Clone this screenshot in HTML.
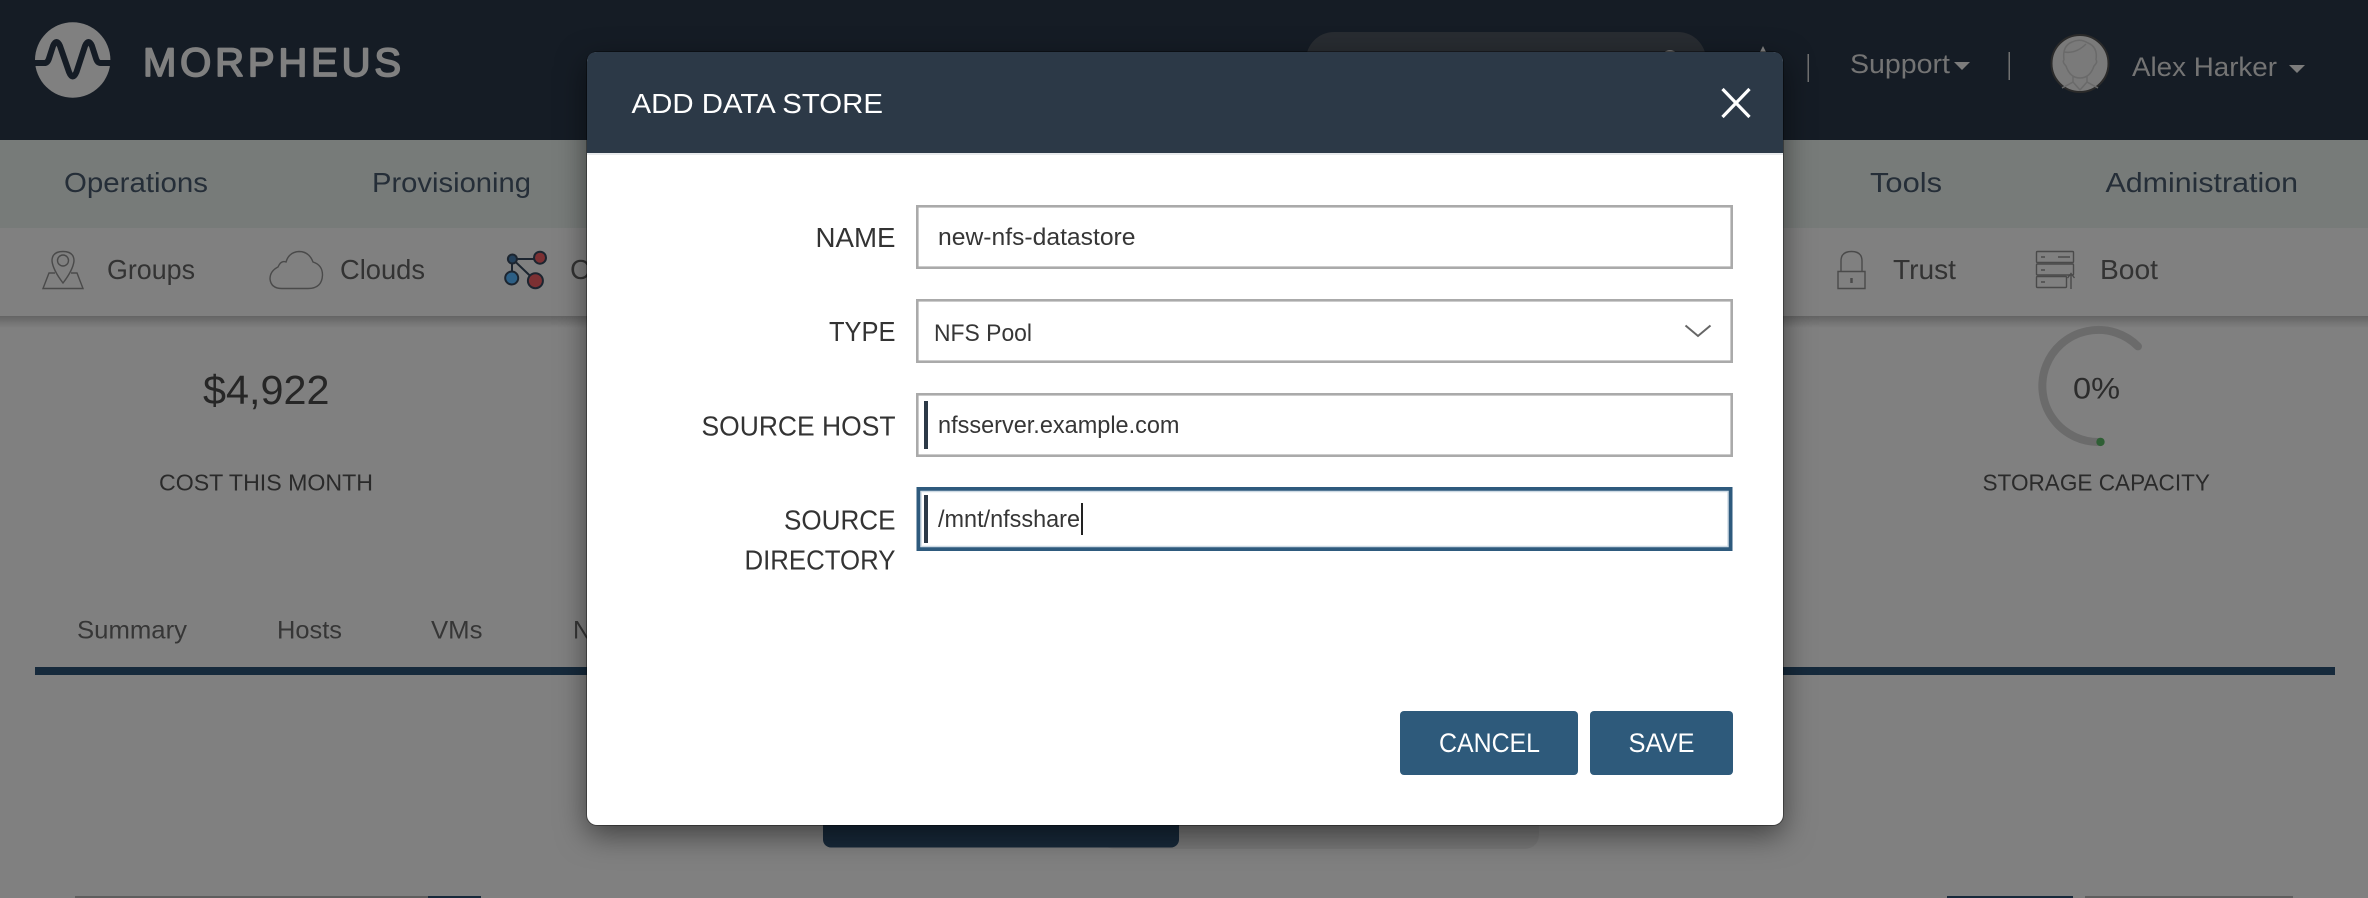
<!DOCTYPE html>
<html>
<head>
<meta charset="utf-8">
<title>Add Data Store</title>
<style>
html,body{margin:0;padding:0;width:2368px;height:898px;overflow:hidden;background:#808080}
svg{position:absolute;left:0;top:0;display:block}
text{font-family:"Liberation Sans",sans-serif}
#modal{position:absolute;left:587px;top:52px;width:1196px;height:773px;background:#fff;border-radius:10px;box-shadow:0 0 0 1px rgba(0,0,0,.35),0 10px 30px rgba(0,0,0,.5)}
</style>
</head>
<body>
<svg width="2368" height="898" viewBox="0 0 2368 898">
<defs><linearGradient id="sh" x1="0" y1="0" x2="0" y2="1"><stop offset="0" stop-color="#000" stop-opacity=".22"/><stop offset="1" stop-color="#000" stop-opacity="0"/></linearGradient></defs>
<rect width="2368" height="898" fill="#808080"/>
<rect width="2368" height="140" fill="#151c25"/>
<rect y="140" width="2368" height="88" fill="#777b79"/>
<rect y="316" width="2368" height="12" fill="url(#sh)"/>

<!-- logo -->
<circle cx="72.7" cy="60" r="37.7" fill="#808080"/>
<path d="M33 63H44.500Q47.500 63 49 58.500L53 46Q56.500 38 60 46L69 72Q72.700 81 76.500 72L85 46Q88.500 38 92 46L96 58.500Q97.500 63 100.500 63H112" fill="none" stroke="#151c25" stroke-width="6"/>
<text x="143" y="76" font-size="40" textLength="258" lengthAdjust="spacing" fill="#808080" stroke="#808080" stroke-width="1.700" stroke-linejoin="round">MORPHEUS</text>

<!-- top right -->
<rect x="1306" y="32" width="400" height="60" rx="28" fill="#282c31"/>
<circle cx="1670" cy="58" r="8" fill="#707070"/>
<path d="M1763 46l3 6h-6z" fill="#808080"/>
<rect x="1807.500" y="54" width="1.500" height="28" fill="#707070"/>
<text x="1850" y="73" font-size="27" textLength="100" lengthAdjust="spacingAndGlyphs" fill="#747474">Support</text>
<path d="M1954 62h16l-8 8z" fill="#7c7c7c"/>
<rect x="2008.500" y="52" width="1.500" height="28" fill="#707070"/>
<circle cx="2080" cy="63.500" r="28.500" fill="#7a7a7a" stroke="#2a2a2a" stroke-width="2"/>
<path d="M2064 60Q2062 46 2072 42Q2080 38 2088 43Q2098 47 2096 60M2064 60Q2062 62 2066 66Q2070 78 2080 78Q2090 78 2094 66Q2098 62 2096 60M2064 52Q2076 54 2086 44M2073 76V82L2062 88M2087 76V82L2098 88M2073 82L2080 90L2087 82" fill="none" stroke="#6a6a6a" stroke-width="1.500"/>
<text x="2132" y="76" font-size="27" textLength="145" lengthAdjust="spacingAndGlyphs" fill="#747474">Alex Harker</text>
<path d="M2289 65h16l-8 8z" fill="#7c7c7c"/>

<!-- primary nav -->
<g font-size="28" fill="#252e38">
<text x="64" y="192" textLength="144" lengthAdjust="spacingAndGlyphs">Operations</text>
<text x="372" y="192" textLength="159" lengthAdjust="spacingAndGlyphs">Provisioning</text>
<text x="1870" y="192" textLength="72" lengthAdjust="spacingAndGlyphs">Tools</text>
<text x="2105.500" y="192" textLength="192.500" lengthAdjust="spacingAndGlyphs">Administration</text>
</g>

<!-- secondary nav -->
<g font-size="28" fill="#333">
<text x="107" y="279" textLength="88" lengthAdjust="spacingAndGlyphs">Groups</text>
<text x="340" y="279" textLength="85" lengthAdjust="spacingAndGlyphs">Clouds</text>
<text x="570" y="279" font-size="28">C</text>
<text x="1893" y="279" textLength="63" lengthAdjust="spacingAndGlyphs">Trust</text>
<text x="2100" y="279" textLength="58" lengthAdjust="spacingAndGlyphs">Boot</text>
</g>
<g fill="none" stroke="#4a4a4a" stroke-width="1.400">
<path d="M63 283Q53 270 52 261Q52 251.500 63 251.500Q74 251.500 74 261Q73 270 63 283Z"/>
<circle cx="63" cy="260.500" r="5.500"/>
<path d="M55 273H49L43 288.500H83L77 273H71"/>
<path d="M287 288.500H308Q322 288.500 322.500 275Q322.500 265 313 262Q309 251.500 299 251.500Q289 252 286 262Q281 260 278 267Q270 271 270 279Q271 288.500 282 288.500Z"/>
<path d="M1838 271.500H1865V288.500H1838Z"/>
<path d="M1841 271.500V261Q1841 251.500 1851.500 251.500Q1862 251.500 1862 261V271.500"/>
<path d="M1851.500 278V283" stroke-width="2.500"/>
<rect x="2036.500" y="251.500" width="37" height="11" rx="1"/>
<rect x="2036.500" y="264" width="37" height="11" rx="1"/>
<rect x="2036.500" y="276.500" width="30" height="11" rx="1"/>
<path d="M2041 257h4M2041 270h4M2041 282h4M2058 257h12"/>
<path d="M2071 289V274M2067.500 278L2071 273.500L2074.500 278"/>
</g>
<g stroke="#1c2530" stroke-width="2">
<path d="M512.500 259H540M512 259V278M512.500 259L535.500 281" fill="none"/>
<circle cx="540" cy="257.700" r="6" fill="#7c3033"/>
<circle cx="511.700" cy="278" r="6.500" fill="#2d5f85"/>
<circle cx="535.400" cy="280.700" r="7.500" fill="#7c3033"/>
<circle cx="512.400" cy="259" r="4.500" fill="#24405a"/>
</g>

<!-- stats -->
<text x="203" y="404" font-size="41" textLength="126.500" lengthAdjust="spacingAndGlyphs" fill="#262626">$4,922</text>
<text x="159" y="490.500" font-size="23" textLength="214" lengthAdjust="spacingAndGlyphs" fill="#2a2a2a">COST THIS MONTH</text>
<path d="M2100.500 441.900A56 56 0 1 1 2138 346.400" fill="none" stroke="#6b6b6b" stroke-width="8" stroke-linecap="round"/>
<circle cx="2100.500" cy="441.900" r="4.200" fill="#2f5f35"/>
<text x="2073" y="398.500" font-size="30" textLength="47" lengthAdjust="spacingAndGlyphs" fill="#2c2c2c">0%</text>
<text x="1982.500" y="490.500" font-size="23" textLength="227.500" lengthAdjust="spacingAndGlyphs" fill="#2a2a2a">STORAGE CAPACITY</text>

<!-- tabs -->
<g font-size="25" fill="#363636">
<text x="77" y="638.500" textLength="110" lengthAdjust="spacingAndGlyphs">Summary</text>
<text x="277" y="638.500" textLength="65" lengthAdjust="spacingAndGlyphs">Hosts</text>
<text x="431" y="638.500" textLength="51.500" lengthAdjust="spacingAndGlyphs">VMs</text>
<text x="573" y="638.500">N</text>
</g>
<rect x="35" y="667" width="2300" height="8" fill="#162a3c"/>

<!-- content behind modal -->
<rect x="1100" y="760" width="439" height="89" rx="14" fill="#797979"/>
<rect x="823" y="760" width="356" height="87.500" rx="8" fill="#17293a"/>
<rect x="75" y="896" width="353" height="2" fill="#5e5e5e"/>
<rect x="428" y="896" width="53" height="2" fill="#17293a"/>
<rect x="1947" y="896" width="126" height="2" fill="#17293a"/>
<rect x="2085" y="896" width="208" height="2" fill="#5e5e5e"/>
</svg>

<div id="modal"></div>

<svg width="2368" height="898" viewBox="0 0 2368 898">
<path d="M587 153V62Q587 52 597 52H1773Q1783 52 1783 62V153Z" fill="#2c3947"/>
<rect x="587" y="153" width="1196" height="2" fill="#e8eaec"/>
<text x="631.500" y="113" font-size="28" textLength="251.500" lengthAdjust="spacingAndGlyphs" fill="#fff">ADD DATA STORE</text>
<path d="M1722.500 89L1749.500 117M1749.500 89L1722.500 117" stroke="#fff" stroke-width="3.200" fill="none"/>

<g font-size="28" fill="#333">
<text x="815.500" y="247" textLength="80" lengthAdjust="spacingAndGlyphs">NAME</text>
<text x="829" y="341" textLength="66.500" lengthAdjust="spacingAndGlyphs">TYPE</text>
<text x="701.500" y="435.500" textLength="194" lengthAdjust="spacingAndGlyphs">SOURCE HOST</text>
<text x="784" y="529.500" textLength="111.500" lengthAdjust="spacingAndGlyphs">SOURCE</text>
<text x="744.500" y="569.500" textLength="151" lengthAdjust="spacingAndGlyphs">DIRECTORY</text>
</g>

<g fill="#fff" stroke="#aaa" stroke-width="2.600">
<rect x="917.300" y="206.300" width="814.400" height="61.400"/>
<rect x="917.300" y="300.300" width="814.400" height="61.400"/>
<rect x="917.300" y="394.300" width="814.400" height="61.400"/>
</g>
<rect x="918.500" y="489" width="812" height="60" fill="#fff" stroke="#2e5a7d" stroke-width="4"/>
<rect x="921" y="491.500" width="807" height="55" fill="none" stroke="#cfdbe5" stroke-width="1.500"/>

<g font-size="24" fill="#363636">
<text x="938" y="245" textLength="197.500" lengthAdjust="spacingAndGlyphs">new-nfs-datastore</text>
<text x="934" y="341" textLength="98" lengthAdjust="spacingAndGlyphs">NFS Pool</text>
<text x="938" y="433" textLength="241.500" lengthAdjust="spacingAndGlyphs">nfsserver.example.com</text>
<text x="938" y="527" textLength="142" lengthAdjust="spacingAndGlyphs">/mnt/nfsshare</text>
</g>
<rect x="1081" y="503" width="2" height="32" fill="#222"/>
<rect x="924" y="401" width="4" height="48" fill="#2c3947"/>
<rect x="924" y="495" width="4" height="48" fill="#2c3947"/>
<path d="M1685.500 325.500L1698 336L1710.500 325.500" fill="none" stroke="#666" stroke-width="2"/>

<rect x="1400" y="711" width="178" height="64" rx="4" fill="#2e5a7b"/>
<rect x="1590" y="711" width="143" height="64" rx="4" fill="#2e5a7b"/>
<text x="1439" y="752" font-size="27" textLength="101" lengthAdjust="spacingAndGlyphs" fill="#fff">CANCEL</text>
<text x="1628.500" y="752" font-size="27" textLength="66" lengthAdjust="spacingAndGlyphs" fill="#fff">SAVE</text>
</svg>
</body>
</html>
